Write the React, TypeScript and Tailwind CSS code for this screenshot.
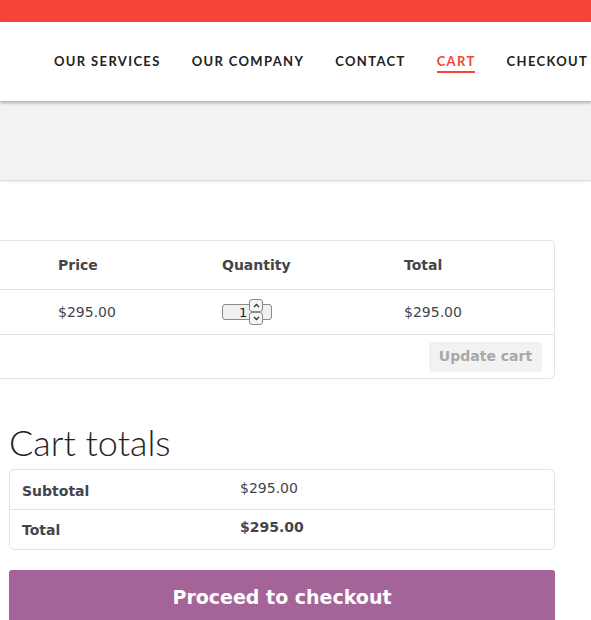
import React from "react"

const NAV = ["OUR SERVICES", "OUR COMPANY", "CONTACT", "CART", "CHECKOUT"]

const body = { fontFamily: '"DejaVu Sans", "Noto Sans", sans-serif' }
const head = { fontFamily: '"Lato", "Noto Sans", sans-serif' }

function QtyInput() {
  return (
    <div className="relative h-[16px] w-[50px] rounded-[3px] border border-[#8a8a8a] bg-[#f0f0f0]">
      <span className="absolute left-[16px] top-[-2px] text-[13px] text-[#222]" style={body}>
        1
      </span>
      <div className="absolute left-[26px] top-[-6px] flex flex-col">
        <div className="flex h-[13px] w-[14px] items-center justify-center rounded-[3px] border border-[#8a8a8a] bg-[#f4f4f4]">
          <svg width="7" height="5" viewBox="0 0 7 5">
            <path d="M1 4 L3.5 1.5 L6 4" stroke="#333" strokeWidth="1.3" fill="none" />
          </svg>
        </div>
        <div className="flex h-[13px] w-[14px] items-center justify-center rounded-[3px] border border-[#8a8a8a] bg-[#f4f4f4]">
          <svg width="7" height="5" viewBox="0 0 7 5">
            <path d="M1 1 L3.5 3.5 L6 1" stroke="#333" strokeWidth="1.3" fill="none" />
          </svg>
        </div>
      </div>
    </div>
  )
}

export default function App() {
  return (
    <div className="min-h-[620px] w-[591px] overflow-hidden bg-white text-[#43454b]" style={body}>
      <div className="h-[22px] bg-[#f64438]" />
      <header className="relative z-10 flex h-[79px] items-center bg-white shadow-[0_2px_3px_rgba(0,0,0,0.28)]">
        <nav className="ml-[54px] flex gap-[31px] whitespace-nowrap">
          {NAV.map((n) => (
            <a
              key={n}
              className={
                "relative text-[13px] font-bold tracking-[1.35px] " +
                (n === "CART" ? "text-[#f64438]" : "text-[#222]")
              }
              style={head}
            >
              {n}
              {n === "CART" && (
                <span className="absolute left-0 right-[1px] top-[19px] h-[2px] bg-[#f64438]" />
              )}
            </a>
          ))}
        </nav>
      </header>
      <div className="h-[80px] border-b border-[#dcdcdc] bg-[#f2f2f2] shadow-[0_1px_2px_rgba(0,0,0,0.08)]" />

      <div className="pl-[9px] pr-[36px] pt-[59px]">
        <div className="-ml-[40px] overflow-hidden rounded-[5px] border border-[#e3e3e3]">
          <div className="flex h-[49px] items-center border-b border-[#e3e3e3] text-[14px] font-bold">
            <span className="ml-[88px] w-[164px]">Price</span>
            <span className="w-[182px]">Quantity</span>
            <span>Total</span>
          </div>
          <div className="flex h-[45px] items-center border-b border-[#e3e3e3] text-[14px]">
            <span className="ml-[88px] w-[164px]">$295.00</span>
            <span className="w-[182px]">
              <QtyInput />
            </span>
            <span>$295.00</span>
          </div>
          <div className="flex h-[43px] items-center justify-end pr-[12px]">
            <button className="h-[30px] w-[113px] rounded-[3px] bg-[#f2f2f2] text-[14px] font-bold text-[#a8a8a8]">
              Update cart
            </button>
          </div>
        </div>

        <h2 className="mt-[43px] text-[36px] font-light leading-[40px] text-[#222]" style={head}>
          Cart totals
        </h2>
        <div className="mt-[7px] overflow-hidden rounded-[5px] border border-[#e3e3e3]">
          <div className="flex h-[40px] border-b border-[#e3e3e3] text-[14px]">
            <span className="ml-[12px] mt-[11px] w-[218px] font-bold">Subtotal</span>
            <span className="mt-[8px]">$295.00</span>
          </div>
          <div className="flex h-[39px] text-[14px]">
            <span className="ml-[12px] mt-[10px] w-[218px] font-bold">Total</span>
            <span className="mt-[7px] font-bold">$295.00</span>
          </div>
        </div>
        <button className="mt-[20px] h-[54px] w-full rounded-t-[3px] bg-[#a46497] text-[19px] font-bold text-white">
          Proceed to checkout
        </button>
      </div>
    </div>
  )
}
